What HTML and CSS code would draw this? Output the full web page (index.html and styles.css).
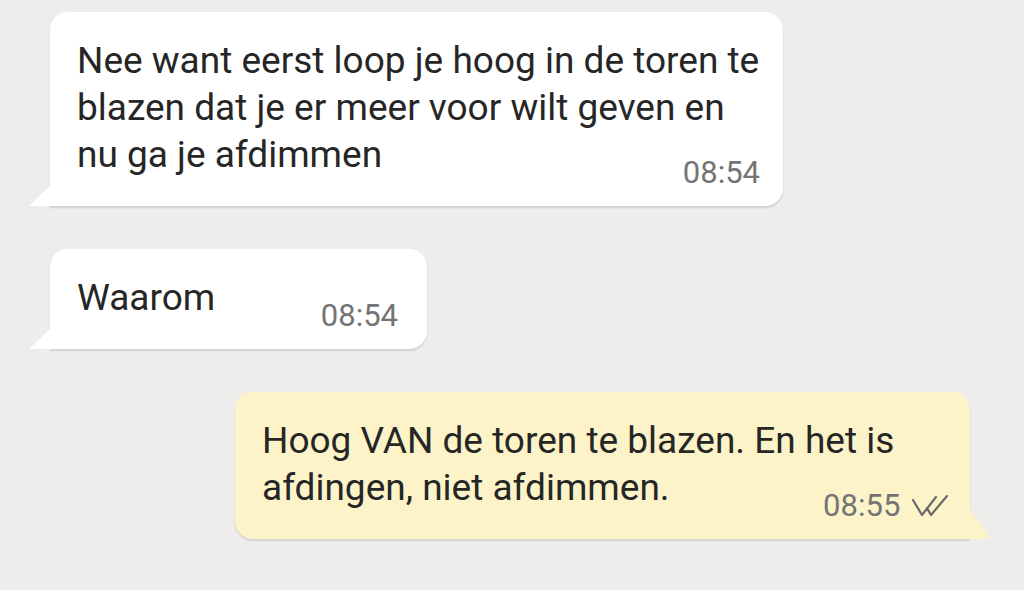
FILE: index.html
```html
<!DOCTYPE html>
<html lang="nl">
<head>
    <meta charset="UTF-8">
    <title>Chat</title>
    <link rel="stylesheet" href="styles.css">
</head>
<body>
    <div class="chat">
        <div class="row in">
            <div class="bubble">
                <div class="text">Nee want eerst loop je hoog in de toren te blazen dat je er meer voor wilt geven en nu ga je afdimmen</div>
                <div class="meta">08:54</div>
            </div>
        </div>
        <div class="row in">
            <div class="bubble short">
                <div class="text">Waarom</div>
                <div class="meta">08:54</div>
            </div>
        </div>
        <div class="row out">
            <div class="bubble">
                <div class="text">Hoog VAN de toren te blazen. En het is afdingen, niet afdimmen.</div>
                <div class="meta">08:55
                    <svg class="ticks" width="36" height="22" viewBox="0 0 36 22"><path d="M1 5 L10 20 L24 2 M15 13 L19 20 L35 1" fill="none" stroke="#6a6a6a" stroke-width="2.2" stroke-linecap="round" stroke-linejoin="round"/></svg>
                </div>
            </div>
        </div>
    </div>
</body>
</html>
```

FILE: styles.css
```css
*{margin:0;padding:0;box-sizing:border-box;}
html,body{height:100%;}
body{background:#eeedeb;font-family:Roboto,"Liberation Sans",sans-serif;color:#262626;}

.chat{display:flex;flex-direction:column;padding-top:12px;}
.row{display:flex;}
.row.in{padding-left:50px;margin-bottom:43px;}
.row.out{justify-content:flex-end;padding-right:54px;}

.bubble{position:relative;background:#fff;border-radius:18px;padding:25px 23px 15px 27px;box-shadow:0 2px 2px rgba(0,0,0,.12);}
.row.in .bubble{border-bottom-left-radius:0;}
.row.out .bubble{background:#fcf4c8;border-bottom-right-radius:0;width:735px;padding-right:22px;}

.row.in .bubble:before{content:"";position:absolute;left:-21px;bottom:0;border-left:21px solid transparent;border-bottom:20px solid #fff;}
.row.out .bubble:after{content:"";position:absolute;right:-20px;bottom:0;border-right:20px solid transparent;border-bottom:30px solid #fcf4c8;}

.text{font-size:37px;line-height:47px;max-width:683px;}
.meta{font-size:31px;color:#747474;text-align:right;margin-top:-23px;line-height:36px;}
.short{width:377px;padding-right:29px;}

.ticks{vertical-align:-1px;margin-left:4px;}
```
